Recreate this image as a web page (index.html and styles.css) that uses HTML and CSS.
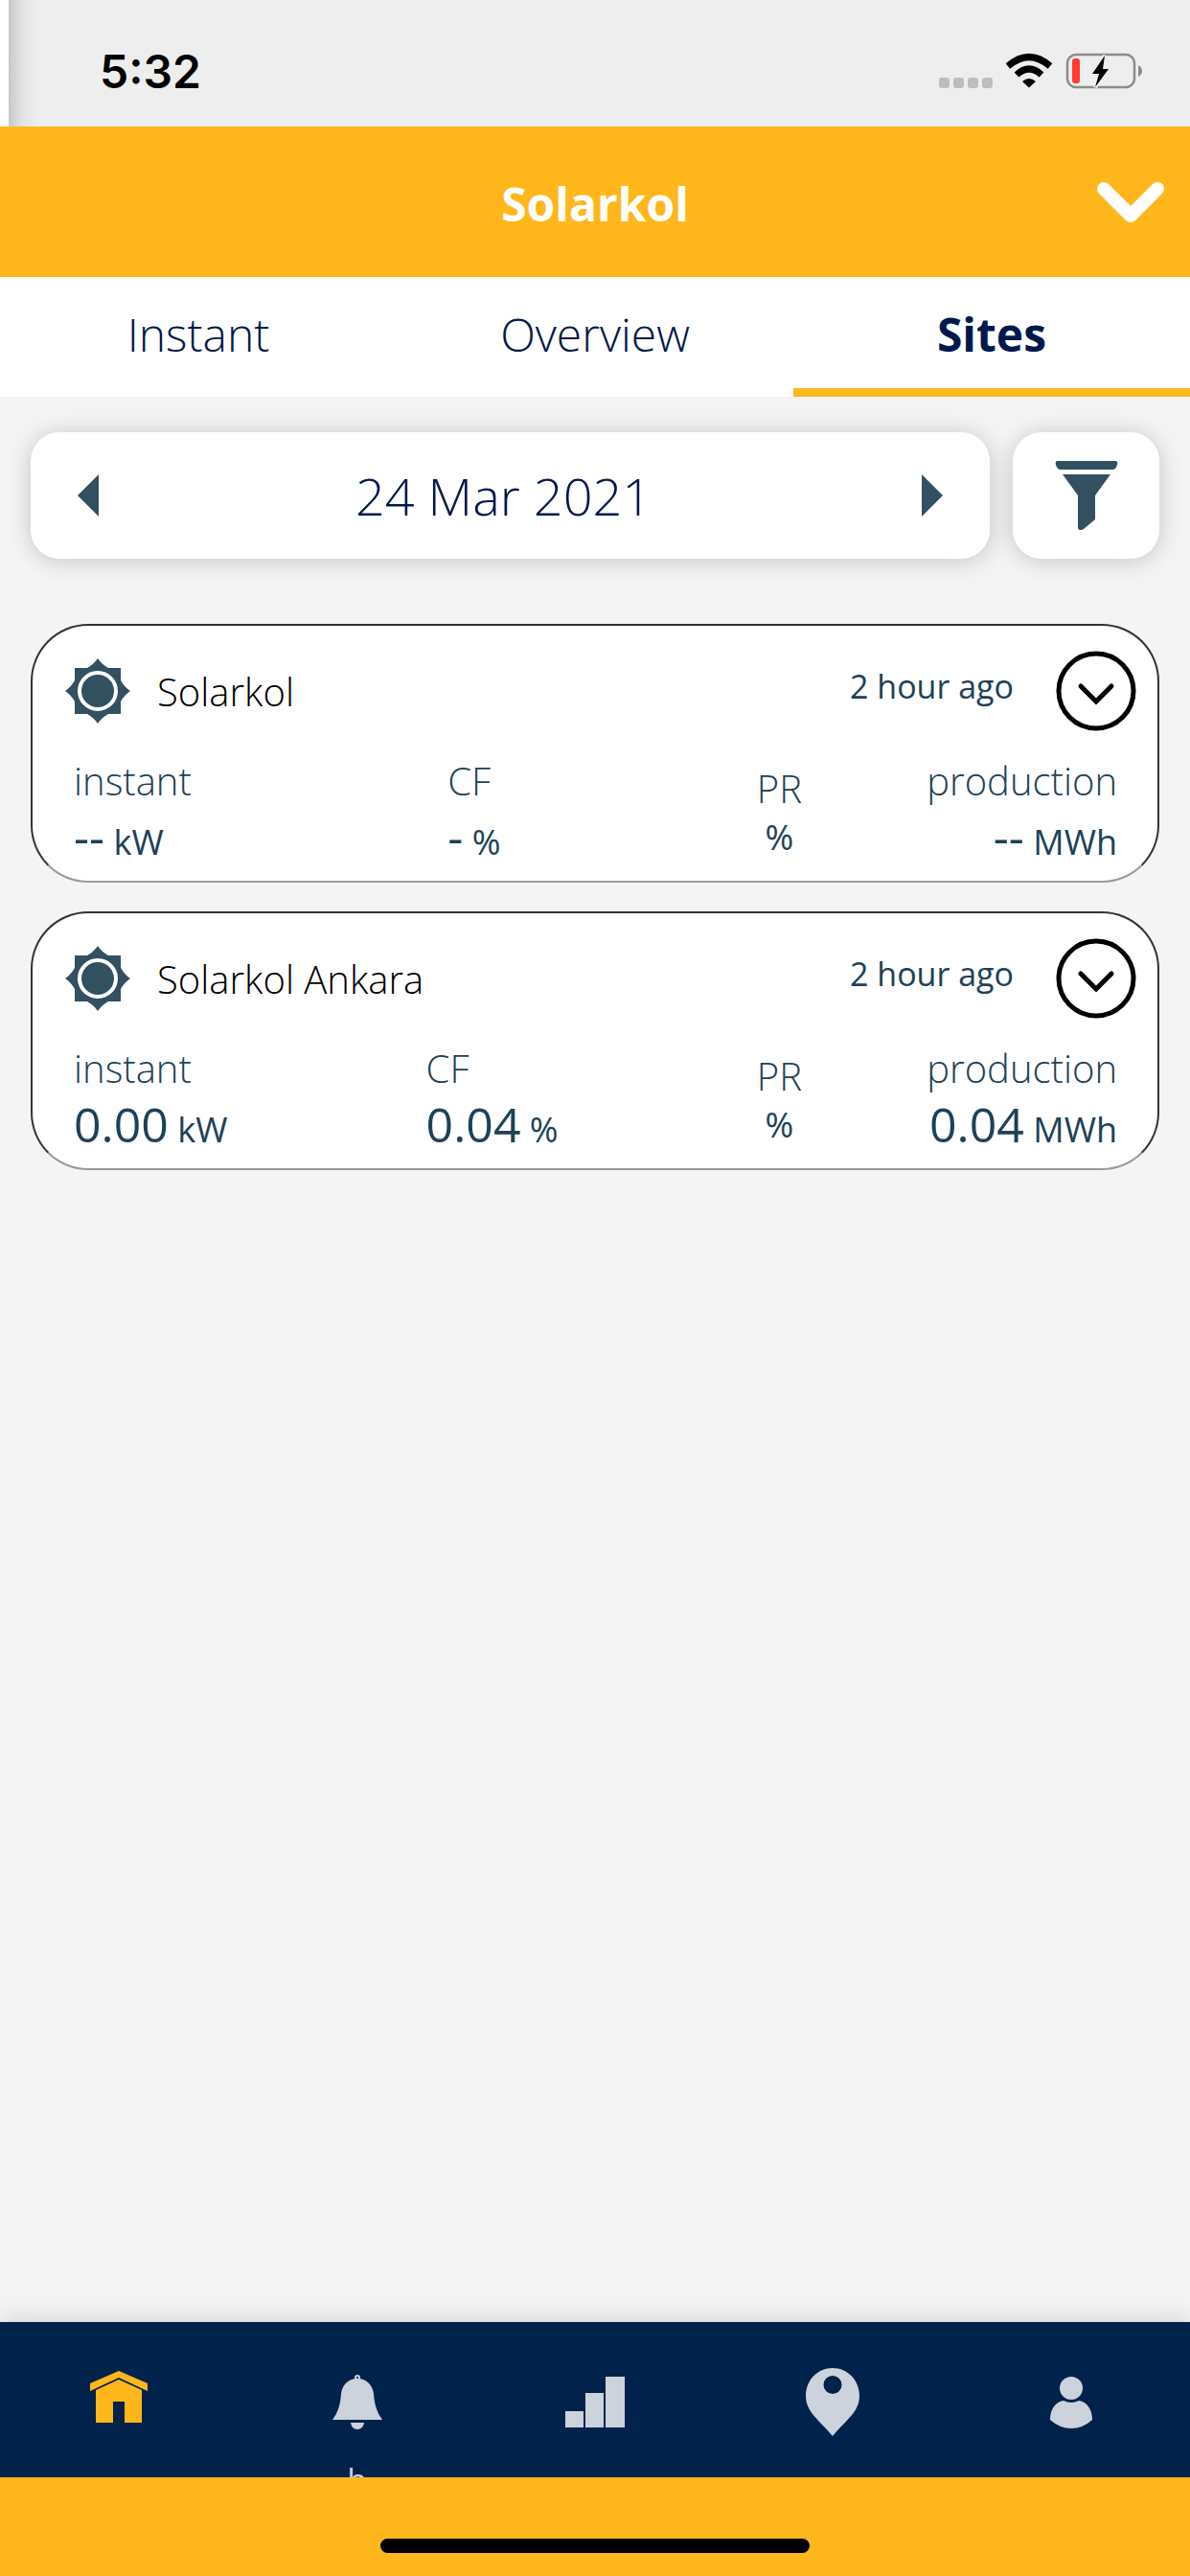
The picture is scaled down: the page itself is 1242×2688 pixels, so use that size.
FILE: index.html
```html
<!DOCTYPE html>
<html lang="en">
<head>
    <meta charset="UTF-8">
    <meta name="viewport" content="width=device-width, initial-scale=1.0">
    <title>Solarkol - Sites</title>
    <link rel="stylesheet" href="styles.css">
</head>
<body>
    <div class="status-bar">
        <span class="time">5:32</span>
        <svg class="status-icons" viewBox="0 0 214 40" aria-hidden="true">
            <g fill="#bdbdbd">
                <rect x="0" y="27" width="11" height="11" rx="3"/>
                <rect x="15" y="27" width="11" height="11" rx="3"/>
                <rect x="30" y="27" width="11" height="11" rx="3"/>
                <rect x="45" y="27" width="11" height="11" rx="3"/>
            </g>
            <g fill="none" stroke="#000" stroke-width="7">
                <path d="M72 15 Q94 -4 116 15"/>
                <path d="M81 24 Q94 12 107 24"/>
            </g>
            <path d="M87 31 Q94 25 101 31 L94 37.500 Z"/>
            <rect x="134" y="3" width="70" height="34" rx="9" fill="none" stroke="#8c8c8c" stroke-width="2.500"/>
            <path d="M208 14 Q212 16 212 20 Q212 24 208 26 Z" fill="#8c8c8c"/>
            <rect x="139" y="7" width="8" height="26" rx="3" fill="#ff3b30"/>
            <path d="M173 4 L160 23 H167 L163 37 L177 18 H171 Z" stroke="#eee" stroke-width="4" paint-order="stroke"/>
        </svg>
    </div>

    <header class="header">
        <h1>Solarkol</h1>
        <button class="header-btn" aria-label="Choose company">
            <svg viewBox="0 0 72 44"><path d="M8 8 L36 36 L64 8" fill="none" stroke="#fff" stroke-width="14" stroke-linecap="round" stroke-linejoin="round"/></svg>
        </button>
    </header>

    <nav class="tabs">
        <a href="#instant">Instant</a>
        <a href="#overview">Overview</a>
        <a href="#sites" class="active">Sites</a>
    </nav>

    <main>
        <div class="filters">
            <div class="date-box">
                <button aria-label="Previous day"><svg viewBox="0 0 22 44"><path d="M22 0 V44 L0 22 Z"/></svg></button>
                <span class="date">24 Mar 2021</span>
                <button aria-label="Next day"><svg viewBox="0 0 22 44"><path d="M0 0 V44 L22 22 Z"/></svg></button>
            </div>
            <button class="filter-btn" aria-label="Filter">
                <svg viewBox="0 0 66 72">
                    <path d="M2 0 H64 Q66 1 65 4 Q64 8 61 9 H5 Q2 8 1 4 Q0 1 2 0 Z"/>
                    <path d="M8 14 H58 L42 36 V61 L30 71 Q24 74 24 69 V36 Z"/>
                </svg>
            </button>
        </div>

        <section class="site">
            <div class="site-top">
                <svg class="sun" viewBox="0 0 68 68">
                    <path d="M34 0 Q38 6 45 10 H58 V23 Q62 30 68 34 Q62 38 58 45 V58 H45 Q38 62 34 68 Q30 62 23 58 H10 V45 Q6 38 0 34 Q6 30 10 23 V10 H23 Q30 6 34 0 Z"/>
                    <circle cx="34" cy="34" r="19" fill="none" stroke="#fff" stroke-width="4"/>
                </svg>
                <h2>Solarkol</h2>
                <span class="ago">2 hour ago</span>
                <button class="expand" aria-label="Show Solarkol">
                    <svg viewBox="0 0 84 84"><circle cx="42" cy="42" r="39"/><path d="M26 37 L42 53 L58 37"/></svg>
                </button>
            </div>
            <div class="values">
                <div class="group">
                    <div class="value"><h3>instant</h3><p><b>--</b> kW</p></div>
                    <div class="value"><h3>CF</h3><p><b>-</b> %</p></div>
                    <div class="value ratio"><h3>PR</h3><p>%</p></div>
                </div>
                <div class="value right"><h3>production</h3><p><b>--</b> MWh</p></div>
            </div>
        </section>

        <section class="site">
            <div class="site-top">
                <svg class="sun" viewBox="0 0 68 68">
                    <path d="M34 0 Q38 6 45 10 H58 V23 Q62 30 68 34 Q62 38 58 45 V58 H45 Q38 62 34 68 Q30 62 23 58 H10 V45 Q6 38 0 34 Q6 30 10 23 V10 H23 Q30 6 34 0 Z"/>
                    <circle cx="34" cy="34" r="19" fill="none" stroke="#fff" stroke-width="4"/>
                </svg>
                <h2>Solarkol Ankara</h2>
                <span class="ago">2 hour ago</span>
                <button class="expand" aria-label="Show Solarkol Ankara">
                    <svg viewBox="0 0 84 84"><circle cx="42" cy="42" r="39"/><path d="M26 37 L42 53 L58 37"/></svg>
                </button>
            </div>
            <div class="values">
                <div class="group">
                    <div class="value"><h3>instant</h3><p><b>0.00</b> kW</p></div>
                    <div class="value"><h3>CF</h3><p><b>0.04</b> %</p></div>
                    <div class="value ratio"><h3>PR</h3><p>%</p></div>
                </div>
                <div class="value right"><h3>production</h3><p><b>0.04</b> MWh</p></div>
            </div>
        </section>
    </main>

    <nav class="bottom-nav">
        <a href="#home" class="active" aria-label="Home">
            <svg viewBox="0 0 72 80">
                <path d="M36 10 L66 23 V31 L36 17 L6 31 V23 Z"/>
                <path d="M36 19 L60 30 V64 H42 V42 H30 V64 H12 V30 Z"/>
            </svg>
        </a>
        <a href="#alarms" aria-label="Alarms">
            <svg viewBox="0 0 72 80">
                <circle cx="36" cy="17" r="2" fill="none" stroke="#ccd3dc" stroke-width="2"/>
                <path d="M36 18 C46 18 52 25 53 34 C54 47 57 54 62 61 H10 C15 54 18 47 19 34 C20 25 26 18 36 18 Z"/>
                <path d="M29 64 H43 Q42 71 36 71 Q30 71 29 64 Z"/>
            </svg>
            <span class="nav-label">h</span>
        </a>
        <a href="#reports" aria-label="Reports">
            <svg viewBox="0 0 72 80">
                <path d="M5 52 H24 V69 H5 Z M26 33 H45 V69 H26 Z M47 16 H67 V69 H47 Z"/>
            </svg>
        </a>
        <a href="#map" aria-label="Map">
            <svg viewBox="0 0 72 80">
                <path fill-rule="evenodd" d="M36 7 C52 7 64 20 64 36 C64 53 50 61 36 78 C22 61 8 53 8 36 C8 20 20 7 36 7 Z M36 15 A9 9 0 1 0 36 34 A9 9 0 1 0 36 15 Z"/>
            </svg>
        </a>
        <a href="#profile" aria-label="Profile">
            <svg viewBox="0 0 72 80">
                <circle cx="36" cy="28" r="12"/>
                <path d="M28 41 Q36 45 44 41 C53 42 58 51 58 61 Q48 70 36 70 Q24 70 14 61 C14 51 19 42 28 41 Z"/>
            </svg>
        </a>
    </nav>
    <footer class="home-bar"><span></span></footer>
</body>
</html>
```
FILE: styles.css
```css
*{
    box-sizing: border-box;
}
body{
    margin: 0;
    min-height: 100vh;
    display: flex;
    flex-direction: column;
    background-color: #f4f4f4;
    font-family: "Open Sans", "Noto Sans", sans-serif;
    color: #1c4258;
}
h1, h2, h3, p{
    margin: 0;
    font-weight: 300;
}
a{
    text-decoration: none;
}
button{
    padding: 0;
    border: none;
    background: none;
    cursor: pointer;
}
svg{
    display: block;
}

.status-bar{
    height: 132px;
    padding: 16px 48px 0 95px;
    display: flex;
    justify-content: space-between;
    align-items: center;
    background: linear-gradient(to right, #c8c8c8, #e2e2e2 14px, #eee 30px);
    border-left: 9px solid #fff;
}
.time{
    font-family: Inter, sans-serif;
    font-size: 48px;
    font-weight: 600;
    color: #000;
}
.status-icons{
    width: 214px;
    height: 40px;
}

.header{
    height: 157px;
    padding: 0 26px;
    display: grid;
    grid-template-columns: 72px 1fr 72px;
    align-items: center;
    background-color: #ffb71b;
}
.header h1{
    grid-column: 2;
    padding-top: 4px;
    text-align: center;
    font-size: 48px;
    font-weight: 700;
    color: #fff;
}
.header-btn svg{
    width: 72px;
    height: 44px;
}

.tabs{
    display: flex;
    height: 125px;
    background-color: #fff;
}
.tabs a{
    flex: 1;
    border-bottom: 9px solid transparent;
    text-align: center;
    font-size: 48px;
    font-weight: 300;
    line-height: 120px;
    color: #00194b;
}
.tabs a.active{
    font-weight: 700;
    border-color: #ffb71b;
}

main{
    flex: 1;
    padding: 37px 32px;
}
.filters{
    display: flex;
    gap: 24px;
    height: 132px;
    margin-bottom: 68px;
}
.date-box, .filter-btn{
    background-color: #fff;
    border-radius: 30px;
    box-shadow: 0 2px 24px rgba(0,0,0,0.2);
}
.date-box{
    flex: 1;
    padding: 0 49px;
    display: flex;
    justify-content: space-between;
    align-items: center;
}
.date-box svg{
    width: 22px;
    height: 44px;
    fill: #335061;
}
.date{
    padding-right: 14px;
    font-size: 54px;
    font-weight: 300;
    color: #00194b;
}
.filter-btn{
    width: 153px;
    display: flex;
    justify-content: center;
    align-items: center;
}
.filter-btn svg{
    width: 66px;
    height: 72px;
    fill: #335061;
}

.site{
    height: 270px;
    margin-bottom: 30px;
    padding: 26px 22px 0 34px;
    background-color: #fff;
    border: 2px solid #333;
    border-bottom-color: #999;
    border-radius: 60px;
}
.site-top{
    display: flex;
    align-items: center;
    height: 84px;
}
.sun{
    width: 68px;
    height: 68px;
    fill: #335061;
}
.site h2{
    flex: 1;
    margin-left: 28px;
    font-size: 40px;
    color: #000;
}
.ago{
    margin-right: 44px;
    padding-bottom: 10px;
    font-size: 34px;
}
.expand svg{
    width: 84px;
    height: 84px;
    fill: none;
    stroke: #000;
    stroke-width: 5;
    stroke-linecap: round;
}
.values{
    display: flex;
    justify-content: space-between;
    padding: 24px 20px 0 9px;
}
.group{
    flex: 0 0 760px;
    display: flex;
    justify-content: space-between;
}
.value h3{
    font-size: 40px;
    line-height: 56px;
}
.value p{
    font-size: 36px;
    font-weight: 400;
    line-height: 60px;
    white-space: nowrap;
}
.value b{
    font-size: 50px;
    font-weight: 500;
}
.ratio{
    padding-top: 8px;
    text-align: center;
}
.ratio p{
    line-height: 46px;
}
.right{
    text-align: right;
}

.bottom-nav{
    display: flex;
    height: 162px;
    overflow: hidden;
    background-color: #00224b;
    box-shadow: 0 -4px 24px rgba(0,0,0,0.12);
    clip-path: inset(-30px 0 0 0);
}
.bottom-nav a{
    flex: 1;
    display: flex;
    flex-direction: column;
    align-items: center;
    padding-top: 41px;
    color: #ccd3dc;
}
.bottom-nav svg{
    width: 72px;
    height: 80px;
    flex-shrink: 0;
    fill: #ccd3dc;
}
.bottom-nav .active svg{
    fill: #ffb71b;
}
/* only the top of the label shows above the bar's edge */
.nav-label{
    margin-top: 20px;
    font-size: 34px;
    line-height: 48px;
}
.home-bar{
    height: 103px;
    padding-top: 64px;
    background-color: #ffb71b;
}
.home-bar span{
    display: block;
    width: 36%;
    height: 15px;
    margin: 0 auto;
    border-radius: 8px;
    background-color: #000;
}
```
